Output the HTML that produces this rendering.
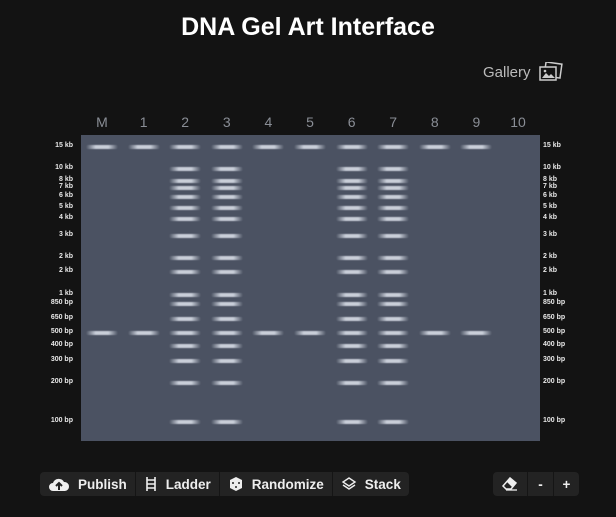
<!DOCTYPE html>
<html><head><meta charset="utf-8"><style>
body{margin:0;width:616px;height:517px;background:#131313;font-family:"Liberation Sans",sans-serif;position:relative;overflow:hidden;color:#fff}
h1{position:absolute;top:13px;left:0;width:616px;text-align:center;margin:0;font-size:25px;font-weight:bold;color:#fff}
.gal{position:absolute;left:483px;top:64px;font-size:15px;color:#bbb}
.gel{position:absolute;left:81px;top:135px;width:459px;height:306px;background:#4b5262}
.ln{position:absolute;top:114px;font-size:14px;color:#8a8e96;width:30px;text-align:center}
.lb{position:absolute;font-size:7px;font-weight:bold;color:#e8e8e8;white-space:nowrap}
.band{position:absolute;width:32px;height:4px;border-radius:2px;background:linear-gradient(90deg,rgba(210,215,225,0),rgba(215,220,230,.9) 30%,rgba(215,220,230,.9) 70%,rgba(210,215,225,0));filter:blur(0.6px)}
.grp{position:absolute;top:472px;height:24px;display:flex;background:#232323;border-radius:4px}
.btn{display:flex;align-items:center;gap:8px;padding:0 8px;font-size:13.5px;font-weight:bold;color:#eee;border-right:1px solid #151515}
.btn:last-child{border-right:none}
</style></head><body>
<h1>DNA Gel Art Interface</h1>
<div class="gal">Gallery</div>
<svg style="position:absolute;left:539px;top:62px" width="24" height="20" viewBox="0 0 24 20"><rect x="6" y="1" width="16" height="14" transform="rotate(8 14 8)" fill="none" stroke="#ccc" stroke-width="1.5"/><rect x="1" y="5" width="16" height="13" fill="#131313" stroke="#ccc" stroke-width="1.5"/><path d="M3 16l4-5 3 3 2-2 4 4z" fill="#ccc"/><circle cx="6" cy="9" r="1.3" fill="#ccc"/></svg>
<div class="gel" id="gel"></div>
<div id="x"></div>
<div class="grp" style="left:40px">
<div class="btn"><svg width="22" height="16" viewBox="0 0 22 16"><path d="M5 15a4 4 0 0 1 0-8 6 6 0 0 1 11-1 4.5 4.5 0 0 1 1 9z" fill="#eee"/><path d="M11 14V8M8 10l3-3 3 3" stroke="#232323" stroke-width="2" fill="none"/></svg>Publish</div>
<div class="btn"><svg width="14" height="16" viewBox="0 0 14 16"><path d="M3 1v14M11 1v14M3 4h8M3 8h8M3 12h8" stroke="#eee" stroke-width="1.6" fill="none"/></svg>Ladder</div>
<div class="btn"><svg width="16" height="16" viewBox="0 0 16 16"><path d="M8 1l6 3v8l-6 3-6-3V4z" fill="#eee"/><circle cx="5" cy="7" r="1" fill="#232323"/><circle cx="11" cy="7" r="1" fill="#232323"/><circle cx="8" cy="11" r="1" fill="#232323"/></svg>Randomize</div>
<div class="btn"><svg width="16" height="16" viewBox="0 0 16 16"><path d="M8 2l6 4-6 4-6-4z" fill="none" stroke="#eee" stroke-width="1.4"/><path d="M2 9l6 4 6-4" fill="none" stroke="#eee" stroke-width="1.4"/></svg>Stack</div>
</div>
<div class="grp" style="left:493px;width:86px">
<div class="btn" style="width:20px;justify-content:center"><svg width="18" height="14" viewBox="0 0 18 14"><path d="M9 1l6 5-5 6H5L2 9z" fill="none" stroke="#eee" stroke-width="1.5"/><path d="M9 1l6 5-4 4-5-5z" fill="#eee"/><path d="M5 13h11" stroke="#eee" stroke-width="1.3"/></svg></div>
<div class="btn" style="width:10px;justify-content:center">-</div>
<div class="btn" style="width:10px;justify-content:center">+</div>
</div>
<script>
var ys=[[147,'15 kb'],[169,'10 kb'],[181,'8 kb'],[188,'7 kb'],[197,'6 kb'],[208,'5 kb'],[219,'4 kb'],[236,'3 kb'],[258,'2 kb'],[272,'2 kb'],[295,'1 kb'],[304,'850 bp'],[319,'650 bp'],[333,'500 bp'],[346,'400 bp'],[361,'300 bp'],[383,'200 bp'],[422,'100 bp']];
var names=['M','1','2','3','4','5','6','7','8','9','10'];var h='',g='';
for(var i=0;i<11;i++){var cx=102+i*41.6;h+='<div class="ln" style="left:'+(cx-15)+'px">'+names[i]+'</div>';
var full=(i==2||i==3||i==6||i==7);
for(var j=0;j<ys.length;j++){if(i==10)break;if(full||j==0||j==13)g+='<div class="band" style="left:'+(cx-81-16)+'px;top:'+(ys[j][0]-135-2)+'px"></div>';}}
for(var j=0;j<ys.length;j++){h+='<div class="lb" style="right:543px;top:'+(ys[j][0]-5)+'px">'+ys[j][1]+'</div><div class="lb" style="left:543px;top:'+(ys[j][0]-5)+'px">'+ys[j][1]+'</div>';}
document.getElementById('x').innerHTML=h;document.getElementById('gel').innerHTML=g;
</script>
</body></html>
